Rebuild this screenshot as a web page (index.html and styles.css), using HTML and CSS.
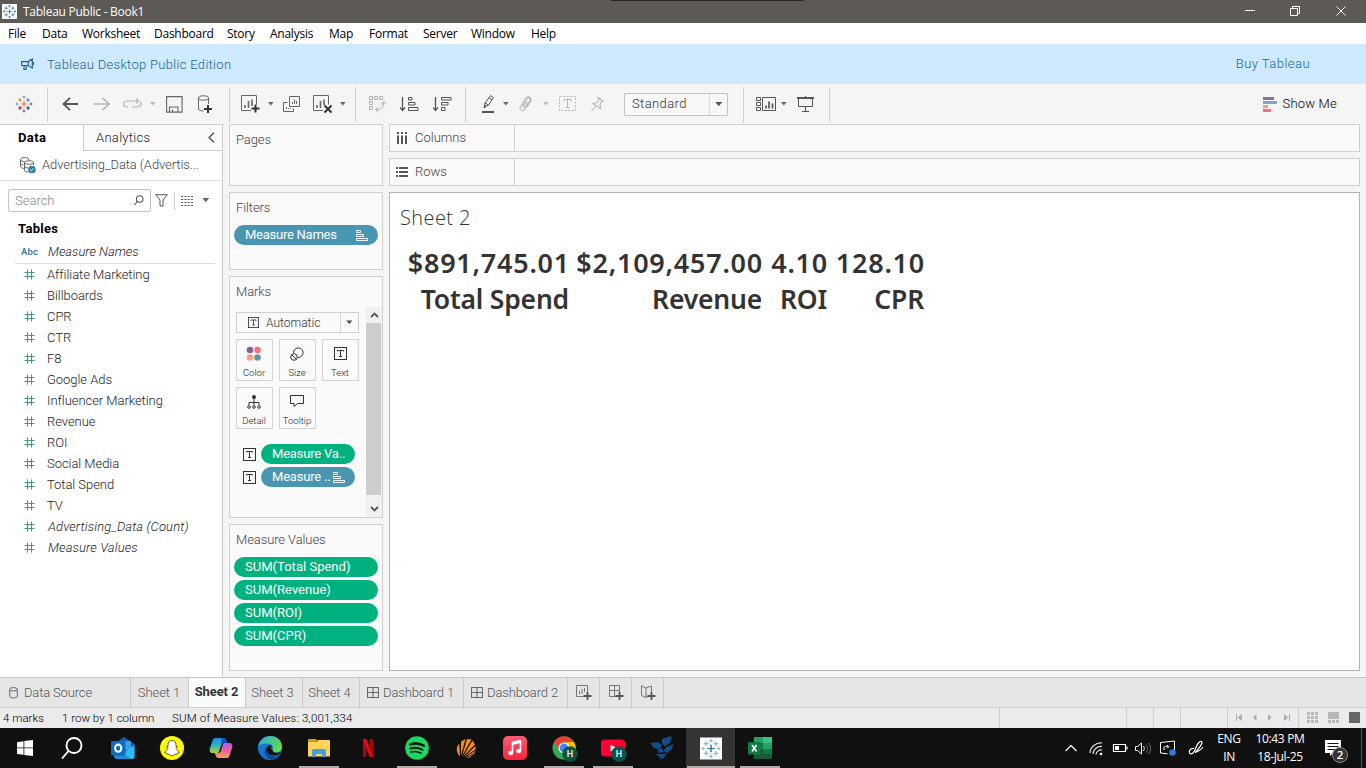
FILE: index.html
```html
<!DOCTYPE html>
<html lang="en">
<head>
<meta charset="utf-8">
<title>Tableau Public - Book1</title>
<link rel="stylesheet" href="styles.css">
</head>
<body>
<svg class="defs" width="0" height="0">
  <symbol id="caret" viewBox="0 0 6 4"><path d="M0 0h5.6L2.8 3.4z" fill="currentColor"/></symbol>
  <symbol id="hash" viewBox="0 0 11 11"><path d="M3.5 0.5v10M7.5 0.5v10M0.5 3.5h10M0.5 7.5h10" stroke="#3f9c7a" fill="none"/></symbol>
  <symbol id="tbox" viewBox="0 0 13 13"><rect x=".5" y=".5" width="12" height="12" fill="none" stroke="#333"/><path d="M3.5 4.5v-1h6v1M6.5 3.5v6M5 9.5h3" fill="none" stroke="#333"/></symbol>
  <symbol id="sortpill" viewBox="0 0 13 11"><path d="M.5.5h4v2h-4zM.5 4.5h7v2h-7zM.5 8.500h11v2H.5z" fill="none" stroke="#fff" stroke-width=".9"/></symbol>
  <symbol id="dash" viewBox="0 0 12 12"><path d="M.5.5h11v10H.5zM6 .5v10M.5 5.500h11" fill="none" stroke="#666" stroke-width="1.1"/></symbol>
  <symbol id="bluelogo" viewBox="0 0 18 18">
    <path d="M9 6v6M6 9h6M5 3v4M3 5h4M13 3v4M11 5h4M5 11v4M3 13h4M13 11v4M11 13h4M9 1v3M7.500 2.500h3M9 14v3M7.500 15.500h3M2.500 7.500v3M1 9h3M15.500 7.500v3M14 9h3" fill="none" stroke="#3a80b0" stroke-width="1"/>
  </symbol>
</svg>

<header class="titlebar">
  <svg class="app-logo" viewBox="0 0 18 18"><rect width="18" height="18" fill="#fff"/><use href="#bluelogo" width="18" height="18"/></svg>
  <span class="win-title">Tableau Public - Book1</span>
  <span class="notch"></span>
  <svg class="winbtns" width="104" height="20" viewBox="0 0 104 20" fill="none" stroke="#fff"><path d="M0 8.500h10M45.500 6.500h7v7h-7zM47.500 6.500v-2h7v7h-2M91.500 4.500l9 9M100.500 4.500l-9 9"/></svg>
</header>

<nav class="menu"><span class="m1">File</span><span class="m2">Data</span><span class="m3">Worksheet</span><span class="m4">Dashboard</span><span class="m5">Story</span><span class="m6">Analysis</span><span class="m7">Map</span><span class="m8">Format</span><span class="m9">Server</span><span class="m10">Window</span><span>Help</span></nav>

<section class="banner">
  <svg width="14" height="13" viewBox="0 0 14 13" fill="none" stroke="#1c6590" stroke-width="1.200"><path d="M.7 3.600h6.500L11.300 1v9L7.200 7.500H.7zM3 7.500v4h2.200v-4M7.300 3.600v4M12.600 4v3"/></svg>
  <span class="banner-text">Tableau Desktop Public Edition</span>
  <span class="buy">Buy Tableau</span>
</section>

<div class="toolbar">
  <div class="tg tg1">
    <svg width="18" height="18" viewBox="0 0 18 18" fill="none" stroke-width="1.100"><path d="M9 6v6M6 9h6" stroke="#e8762c"/><path d="M5 3v4M3 5h4" stroke="#eb912c"/><path d="M13 3v4M11 5h4" stroke="#59879b"/><path d="M5 11v4M3 13h4" stroke="#c72037"/><path d="M13 11v4M11 13h4" stroke="#1f447e"/><path d="M9 .5v3M7.500 2h3" stroke="#7199a6"/><path d="M9 14.500v3M7.500 16h3M16 7.500v3M14.500 9h3" stroke="#5b6591"/><path d="M2 7.500v3M.5 9h3" stroke="#7199a6"/></svg>
  </div>
  <div class="tg tg2">
    <svg width="17" height="14" viewBox="0 0 17 14" fill="none" stroke="#555" stroke-width="1.800"><path d="M16 7H1.500M8 .8L1.500 7 8 13.200"/></svg>
    <svg width="17" height="14" viewBox="0 0 17 14" fill="none" stroke="#b4b4b4" stroke-width="1.600"><path d="M0 7h15M8.500.8L15 7l-6.500 6.200"/></svg>
    <svg width="19" height="14" viewBox="0 0 19 14" fill="none" stroke="#b4b4b4" stroke-width="1.200"><path d="M5 10H4C-.5 10-.5 4 4 4h11M13 1.500L15.500 4 13 6.500M17 4.500c2 2 .5 5.500-2 5.500H9"/></svg>
    <svg class="caret light" width="6" height="4"><use href="#caret"/></svg>
    <svg width="17" height="17" viewBox="0 0 17 17" fill="none" stroke="#666" stroke-width="1.100"><path d="M.6.6h15.500v15.500H.6zM3.500 16v-5h8.500v5M6.500 16v-2.500"/></svg>
    <svg width="16" height="18" viewBox="0 0 16 18" fill="none" stroke="#666"><ellipse cx="5.500" cy="3" rx="5" ry="2.200"/><path d="M.5 3v11c0 1 2 2 5 2M10.500 3v6"/><path d="M10 10v8M6 14h8" stroke="#333" stroke-width="2"/></svg>
  </div>
  <div class="tg tg3">
    <svg width="20" height="18" viewBox="0 0 20 18" fill="none" stroke="#666"><path d="M10 15.500H.5V.5h15v9"/><path d="M4 13v-3M7.500 13V6M11 11V4.500" stroke-width="1.600"/><path d="M14.500 9.500v8M10.500 13.500h8" stroke="#333" stroke-width="2"/></svg>
    <svg class="caret" width="6" height="4"><use href="#caret"/></svg>
    <svg width="18" height="17" viewBox="0 0 18 17" fill="none" stroke="#666"><path d="M6.500 .5h10v10h-10zM4.500 6.500h-4v9h10v-3M9.500 8V6M11.500 8V3.500M13.500 8V5M3.500 13v-2M5.500 13v-1M7.500 13v-1"/></svg>
    <svg width="20" height="19" viewBox="0 0 20 19" fill="none" stroke="#666"><path d="M10 15.500H.5V.5h15v9"/><path d="M4 13v-3M7.500 13V6M11 10V4.500" stroke-width="1.600"/><path d="M11.500 10.500l7 7M18.500 10.500l-7 7" stroke="#333" stroke-width="2"/></svg>
    <svg class="caret" width="6" height="4"><use href="#caret"/></svg>
  </div>
  <div class="tg tg4">
    <svg width="18" height="18" viewBox="0 0 18 18" fill="none" stroke="#b0b0b0"><path d="M.5 1.500h3v3h-3zM5.500 1.500h3v3h-3zM10.500 1.500h3v3h-3zM.5 6.500h3v3h-3zM.5 11.500h3v3h-3zM7 14.500c5 1 8-2 7.500-7M9.500 12L6.500 14.500l3 3M12 9.500l2.500-3 3 3"/></svg>
    <svg width="19" height="16" viewBox="0 0 19 16" fill="none" stroke="#555"><path d="M2.500 1v13M0 11.500L2.500 14.500 5 11.500" stroke-width="1.300"/><path d="M8.500 1.500h3.500v2.500H8.500zM8.500 6.500h6.500v2.500H8.500zM8.500 11.500h9.500v3H8.500z"/></svg>
    <svg width="19" height="16" viewBox="0 0 19 16" fill="none" stroke="#555"><path d="M2.500 1v13M0 11.500L2.500 14.500 5 11.500" stroke-width="1.300"/><path d="M8.500 1.500h9.500v2.500H8.500zM8.500 6.500h6.500v2.500H8.500zM8.500 11.500h3.500v3H8.500z"/></svg>
  </div>
  <div class="tg tg5">
    <svg width="13" height="18" viewBox="0 0 13 18" fill="none" stroke="#555"><path d="M2 13l1-5L8.500.6l3 2L6.500 10zM3 8l3.500 2M7 3l3 2M4 10l-2 3"/><path d="M0 17h12" stroke-width="2"/></svg>
    <svg class="caret" width="6" height="4"><use href="#caret"/></svg>
    <svg width="13" height="16" viewBox="0 0 13 16" fill="none" stroke="#b8b8b8" stroke-width="1.100"><path d="M3.500 10L8 3c1.500-2 4-.5 3 1.500L6 13c-2 3.500-6.500 1-4.500-2.500L6.500 2.500C8.500-.5 13 1 12 4.500L8 11M7.500 5L4.500 10c-.5 1.500 1 2 2 1L9 6"/></svg>
    <svg class="caret light" width="6" height="4"><use href="#caret"/></svg>
    <svg width="17" height="16" viewBox="0 0 17 16" fill="none" stroke="#b8b8b8"><rect x=".5" y=".5" width="16" height="14" stroke-dasharray="2 1.500"/><path d="M5 5.500v-2h7v2M8.500 3.500v8M6.500 11.500h4"/></svg>
    <svg width="14" height="16" viewBox="0 0 14 16" fill="none" stroke="#b8b8b8" stroke-width="1.100"><path d="M6.500 1l5.500 4-1.500.7-1.500 3 .5 3.800L2 7.500l4-1 2-3zM5 10l-4.500 5"/></svg>
    <div class="select"><span>Standard</span><i><svg width="8" height="5" viewBox="0 0 6 4"><use href="#caret" width="6" height="4"/></svg></i></div>
  </div>
  <div class="tg tg6">
    <svg width="21" height="16" viewBox="0 0 21 16" fill="none" stroke="#555"><path d="M.5 1.500h4v3h-4zM.5 6.500h4v3h-4zM.5 11.500h4v3h-4zM6.500 1.500h13v13h-13z"/><path d="M10 12.500v-3M13 12.500v-7M16.500 12.500v-5" stroke-width="1.700"/></svg>
    <svg class="caret" width="6" height="4"><use href="#caret"/></svg>
    <svg width="18" height="17" viewBox="0 0 18 17" fill="none" stroke="#555"><path d="M0 2h17" stroke-width="2"/><path d="M1.500 2v8.500h14V2M8.500 0v2M8.500 10.500v5M5 15.500h7"/></svg>
  </div>
  <div class="showme">
    <svg width="14" height="15" viewBox="0 0 14 15"><path d="M0 0h11v3H0z" fill="#8c7299"/><path d="M0 4h14v3H0z" fill="#7fa4ce"/><path d="M0 8h5v3H0z" fill="#f4a278"/><path d="M0 12h8v3H0z" fill="#fa6e7e"/></svg>
    <span>Show Me</span>
  </div>
</div>

<main class="work">
  <aside class="datapane">
    <div class="ptabs"><b>Data</b><div class="ptab2"><span>Analytics</span><svg width="7" height="11" viewBox="0 0 7 11" fill="none" stroke="#444" stroke-width="1.200"><path d="M6 .8L1 5.500l5 4.700"/></svg></div></div>
    <div class="source">
      <svg width="17" height="17" viewBox="0 0 17 17" fill="none" stroke="#666"><path d="M4 11.500C1.500 11 .5 10.500.5 9V2.500C.5 0 8.500 0 8.500 2v1M.5 2.500c0 1.500 2 2 4 2M.5 6c0 1 1 1.500 3 2"/><ellipse cx="9" cy="5.500" rx="4.500" ry="1.800"/><path d="M4.500 5.500V13c0 1.500 2 2 4 2M13.500 5.500V8M4.500 9c0 1.500 2 2 4 2"/><circle cx="12" cy="12.500" r="3.800" fill="#2f7fa6" stroke="none"/><path d="M10.200 12.500l1.300 1.300 2.300-2.600" stroke="#fff"/></svg>
      <span>Advertising_Data (Advertis...</span>
    </div>
    <div class="searchrow">
      <div class="search"><span>Search</span><svg width="10" height="11" viewBox="0 0 10 11" fill="none" stroke="#555" stroke-width="1.100"><circle cx="5.700" cy="4" r="3.300"/><path d="M3.300 6.500L.5 9.800"/></svg></div>
      <svg class="funnel" width="13" height="13" viewBox="0 0 13 13" fill="none" stroke="#555"><path d="M.7.7h11.600L8 6v6H5V6z"/></svg>
      <i class="vline"></i>
      <svg width="13" height="10" viewBox="0 0 13 10" stroke="#666"><path d="M0 .5h12M0 3.500h12M0 6.500h12M0 9.500h12" stroke-dasharray="2.300 1"/></svg>
      <svg class="caret vcaret" width="8" height="5" viewBox="0 0 6 4"><use href="#caret" width="6" height="4"/></svg>
    </div>
    <h3>Tables</h3>
    <ul class="fields">
      <li class="names"><small>Abc</small><em>Measure Names</em></li>
      <li><svg width="11" height="11"><use href="#hash"/></svg><span>Affiliate Marketing</span></li>
      <li><svg width="11" height="11"><use href="#hash"/></svg><span>Billboards</span></li>
      <li><svg width="11" height="11"><use href="#hash"/></svg><span>CPR</span></li>
      <li><svg width="11" height="11"><use href="#hash"/></svg><span>CTR</span></li>
      <li><svg width="11" height="11"><use href="#hash"/></svg><span>F8</span></li>
      <li><svg width="11" height="11"><use href="#hash"/></svg><span>Google Ads</span></li>
      <li><svg width="11" height="11"><use href="#hash"/></svg><span>Influencer Marketing</span></li>
      <li><svg width="11" height="11"><use href="#hash"/></svg><span>Revenue</span></li>
      <li><svg width="11" height="11"><use href="#hash"/></svg><span>ROI</span></li>
      <li><svg width="11" height="11"><use href="#hash"/></svg><span>Social Media</span></li>
      <li><svg width="11" height="11"><use href="#hash"/></svg><span>Total Spend</span></li>
      <li><svg width="11" height="11"><use href="#hash"/></svg><span>TV</span></li>
      <li><svg width="11" height="11"><use href="#hash"/></svg><em>Advertising_Data (Count)</em></li>
      <li><svg width="11" height="11"><use href="#hash"/></svg><em>Measure Values</em></li>
    </ul>
  </aside>

  <section class="cards">
    <div class="card pages"><h4>Pages</h4></div>
    <div class="card filters"><h4>Filters</h4><div class="pill blue"><span>Measure Names</span><svg width="13" height="11"><use href="#sortpill"/></svg></div></div>
    <div class="card marks">
      <h4>Marks</h4>
      <div class="marks-body">
        <div class="marks-main">
          <div class="marktype"><svg width="11" height="11" viewBox="0 0 13 13"><use href="#tbox" width="13" height="13"/></svg><span>Automatic</span><i><svg width="7" height="5" viewBox="0 0 6 4"><use href="#caret" width="6" height="4"/></svg></i></div>
          <div class="btns">
            <div class="mbtn"><svg width="16" height="16" viewBox="0 0 16 16"><circle cx="4" cy="4" r="3.300" fill="#7f6892"/><circle cx="11.500" cy="4" r="3.300" fill="#fa6e7e"/><circle cx="4" cy="11.500" r="3.300" fill="#f4a278"/><circle cx="11.500" cy="11.500" r="3.300" fill="#6497a5"/></svg><span>Color</span></div>
            <div class="mbtn"><svg width="16" height="16" viewBox="0 0 16 16" fill="none" stroke="#333"><path d="M4.500 7A4.800 4.800 0 1 1 9 11.500"/><circle cx="5" cy="11" r="3.300"/><path d="M2.700 8.700l4.600 4.600"/></svg><span>Size</span></div>
            <div class="mbtn"><svg width="13" height="16" viewBox="0 -1 13 16"><use href="#tbox" width="13" height="13"/></svg><span>Text</span></div>
            <div class="mbtn"><svg width="14" height="16" viewBox="0 0 14 16" fill="none" stroke="#333"><circle cx="7" cy="3" r="2" fill="#333" stroke="none"/><path d="M7 4v7M2 11V8.500h10V11"/><circle cx="2" cy="13" r="1.300"/><circle cx="7" cy="13" r="1.300"/><circle cx="12" cy="13" r="1.300"/></svg><span>Detail</span></div>
            <div class="mbtn"><svg width="15" height="16" viewBox="0 0 15 16" fill="none" stroke="#333"><path d="M.5 1.500h13v8H7.500L4 12.500v-3H.5z"/></svg><span>Tooltip</span></div>
          </div>
          <div class="markpills">
            <svg width="13" height="13"><use href="#tbox"/></svg><div class="pill green"><span>Measure Va..</span></div>
            <svg width="13" height="13"><use href="#tbox"/></svg><div class="pill blue"><span>Measure ..</span><svg width="13" height="11"><use href="#sortpill"/></svg></div>
          </div>
        </div>
        <div class="scroll"><svg width="9" height="6" viewBox="0 0 9 6" fill="none" stroke="#555" stroke-width="1.800"><path d="M1 5l3.500-3.500L8 5"/></svg><i></i><svg width="9" height="6" viewBox="0 0 9 6" fill="none" stroke="#555" stroke-width="1.800"><path d="M1 1l3.500 3.500L8 1"/></svg></div>
      </div>
    </div>
    <div class="card values"><h4>Measure Values</h4>
      <div class="pill green"><span>SUM(Total Spend)</span></div><div class="pill green"><span>SUM(Revenue)</span></div><div class="pill green"><span>SUM(ROI)</span></div><div class="pill green"><span>SUM(CPR)</span></div>
    </div>
  </section>

  <section class="view">
    <div class="shelf"><div class="shelf-label"><svg width="12" height="13" viewBox="0 0 12 13" stroke="#555" stroke-width="2"><path d="M2 0v2M6 0v2M10 0v2M2 3.500v8.500M6 3.500v8.500M10 3.500v8.500"/></svg><span>Columns</span></div></div>
    <div class="shelf"><div class="shelf-label"><svg width="12" height="13" viewBox="0 0 12 13" stroke="#555" stroke-width="2"><path d="M0 2h2M0 6h2M0 10h2M3 2h9M3 6h9M3 10h9"/></svg><span>Rows</span></div></div>
    <div class="sheet">
      <h2>Sheet 2</h2>
      <div class="bans">
        <div class="num">$891,745.01</div><div class="num">$2,109,457.00</div><div class="num">4.10</div><div class="num">128.10</div>
        <div class="lbl">Total Spend</div><div class="lbl">Revenue</div><div class="lbl">ROI</div><div class="lbl">CPR</div>
      </div>
    </div>
  </section>
</main>

<div class="sheettabs">
  <div class="st s0"><svg width="9" height="12" viewBox="0 0 9 12" fill="none" stroke="#666"><ellipse cx="4.500" cy="2.300" rx="3.800" ry="1.700"/><path d="M.7 2.300v7c0 2.200 7.600 2.200 7.600 0v-7"/></svg><span>Data Source</span></div>
  <div class="st s1">Sheet 1</div><div class="st s2">Sheet 2</div><div class="st s3">Sheet 3</div><div class="st s4">Sheet 4</div>
  <div class="st s5"><svg width="12" height="12"><use href="#dash"/></svg><span>Dashboard 1</span></div>
  <div class="st s6"><svg width="12" height="12"><use href="#dash"/></svg><span>Dashboard 2</span></div>
  <div class="st s7"><svg width="16" height="15" viewBox="0 0 16 15" fill="none" stroke="#777"><path d="M8 11.500H.5V.5h11V8M3.500 9V6M6 9V4M8.500 7V3"/><path d="M11.500 7v8M7.500 11h8" stroke="#555" stroke-width="1.800"/></svg></div>
  <div class="st s7"><svg width="16" height="15" viewBox="0 0 16 15" fill="none" stroke="#777"><path d="M8 11.500H1.500V.5h10V8M6.500.5v11M1.500 5.500h10"/><path d="M11.500 7v8M7.500 11h8" stroke="#555" stroke-width="1.800"/></svg></div>
  <div class="st s7"><svg width="16" height="15" viewBox="0 0 16 15" fill="none" stroke="#777"><path d="M6 3L1.500.8V10.500l4.500 2L8 11.500M6 3l5.500-2V8M6 3v9.500"/><path d="M11.500 7v8M7.500 11h8" stroke="#555" stroke-width="1.800"/></svg></div>
</div>

<div class="status">
  <span class="t1">4 marks</span><span class="t2">1 row by 1 column</span><span class="t3">SUM of Measure Values: 3,001,334</span>
  <div class="cells"><i class="c1"></i><i class="c2"></i><i class="c2"></i><i class="c3"></i>
    <div class="pager"><svg width="55" height="7" viewBox="0 0 55 7" fill="#aaa"><path d="M0 0h1v7H0zM6 0v7L1.500 3.500zM20.500 0v7L17 3.500zM32 0v7l3.500-3.500zM48 0v7l4-3.500zM53 0h1v7h-1z"/></svg></div>
    <div class="modes"><svg width="54" height="11" viewBox="0 0 54 11" fill="#b8b8b8"><path d="M0 0h3v3H0zM4 0h3v3H4zM8 0h3v3H8zM0 4h3v3H0zM4 4h3v3H4zM8 4h3v3H8zM0 8h3v3H0zM4 8h3v3H4zM8 8h3v3H8zM21 0h11v7H21zM21 8h3v3h-3zM25 8h3v3h-3zM29 8h3v3h-3z"/><path d="M42 0h11v11H42z" fill="#666"/></svg></div>
  </div>
</div>

<footer class="taskbar">
  <div class="tk"><svg width="16" height="16" viewBox="0 0 16 16" fill="#fff"><path d="M0 2.200L6.500 1.200v6.300H0zM7.300 1.100L16 0v7.500H7.300zM0 8.300h6.500v6.500L0 13.900zM7.300 8.300H16V16l-8.700-1.100z"/></svg></div>
  <div class="tk"><svg class="find" width="22" height="22" viewBox="0 0 22 22" fill="none" stroke="#fff" stroke-width="1.900"><circle cx="13" cy="8.500" r="7.500"/><path d="M7.500 14L1 21.500"/></svg></div>
  <div class="tk"><svg width="24" height="24" viewBox="0 0 24 24"><path d="M3 8L13 1l10.500 7v12.500a2.500 2.500 0 0 1-2.500 2.500H6.500A3.500 3.500 0 0 1 3 19.500z" fill="#0f5fae"/><path d="M7 5h13v9H7z" fill="#39a0e8"/><path d="M23.500 9v11.500A2.500 2.500 0 0 1 21 23H4.500z" fill="#2bbef5"/><path d="M3.500 13L21 23H6.500C4 23 3 21 3 19z" fill="#1b8ddb"/><rect y="5" width="14.500" height="14.500" rx="1.500" fill="#0f6cbd"/><ellipse cx="7.200" cy="12.200" rx="3.100" ry="3.600" fill="none" stroke="#fff" stroke-width="2"/></svg></div>
  <div class="tk"><svg width="24" height="24" viewBox="0 0 24 24"><circle cx="12" cy="12" r="12" fill="#fffb00"/><path d="M12 4.500c2.800 0 4 2 4 4v2l1.500.3-1.300 1.500c.5 2 1.700 3 3.300 3.700-.5 1-1.500 1-2.200 1.200l-.5 1.200c-1-.3-2-.2-3 .7-1 .8-2.600.8-3.600 0-1-.9-2-1-3-.7l-.5-1.200C6 17 5 17 4.500 16c1.600-.7 2.800-1.700 3.300-3.700l-1.300-1.500 1.500-.3v-2c0-2 1.200-4 4-4z" fill="#fff" stroke="#333" stroke-width=".8"/></svg></div>
  <div class="tk"><svg width="24" height="22" viewBox="0 0 24 22"><defs><linearGradient id="cp1" x1="0" y1="0" x2="0" y2="1"><stop offset="0" stop-color="#1b8bea"/><stop offset=".5" stop-color="#2bb6c4"/><stop offset="1" stop-color="#b9cf28"/></linearGradient><linearGradient id="cp2" x1="0" y1="0" x2="0" y2="1"><stop offset="0" stop-color="#b35cf0"/><stop offset=".5" stop-color="#f0609a"/><stop offset="1" stop-color="#ffa554"/></linearGradient></defs><path d="M6 1h8c2 0 3 1 3.500 3l.8 2H15c-2 0-2.500 1-3 2.500l-2 6C9.500 16 9 16 7.500 16H4c-3 0-4-2-3-5L3.500 3.500C4 2 4.500 1 6 1z" fill="url(#cp1)"/><path d="M12.500 1H14c2 0 3 1 3.500 3l.8 2H15c-1.500 0-2.200.8-2.800 2z" fill="#1551c4"/><path d="M18 21h-8c-2 0-3-1-3.500-3l-.7-2H9c2 0 2.500-1 3-2.500l2-6C14.500 6 15 6 16.500 6H20c3 0 4 2 3 5l-2.500 7.500C20 20 19.500 21 18 21z" fill="url(#cp2)"/></svg></div>
  <div class="tk"><svg width="24" height="24" viewBox="0 0 24 24"><defs><linearGradient id="eg" x1="0" y1="0" x2="1" y2=".5"><stop offset="0" stop-color="#28a9e5"/><stop offset="1" stop-color="#60d94d"/></linearGradient></defs><circle cx="12" cy="12" r="12" fill="#1676cc"/><path d="M.3 10C1.500 4 6.500 0 12.300 0 19.500 0 24 5 24 10.500c0 4-3 6-6 6-3.500 0-4.200-1.500-3.500-2.500 1.700-3-.5-6.500-5.500-6.500C5 7.500 1.500 8.500.3 10z" fill="url(#eg)"/><path d="M9 10c-5 5-1 13.500 5 13.800 3.500 0 6-2 7.500-4.300-6 3-14.500-1.500-12.500-9.500z" fill="#0d4a97"/><path d="M14.500 14c-2-.5-2-3-.5-4-3-1.500-6 .5-5.500 4 .6 4 6.500 7 12.500 4.500l2-2.500c-3 1.500-8 1-8.500-2z" fill="#111"/></svg></div>
  <div class="tk run"><svg width="22" height="19" viewBox="0 0 22 19"><path d="M0 1a1 1 0 0 1 1-1h7l2 2h-1L8 4H0z" fill="#dc9415"/><path d="M0 3h9l1-2h11a1 1 0 0 1 1 1v15.500H0z" fill="#ffd35c"/><path d="M4 18v-6a2 2 0 0 1 2-2h10a2 2 0 0 1 2 2v6h-4v-3H8v3z" fill="#45a0dc"/></svg></div>
  <div class="tk"><svg width="10" height="18" viewBox="0 0 10 18"><path d="M0 0h3.300v17.500L0 18zM6.700 0H10v18l-3.300-.5z" fill="#a90710"/><path d="M0 0h3.500L10 18l-3.500-.5z" fill="#e50914"/></svg></div>
  <div class="tk run"><svg width="24" height="24" viewBox="0 0 24 24" fill="none" stroke="#111" stroke-linecap="round"><circle cx="12" cy="12" r="11.800" fill="#1ed760" stroke="none"/><path d="M5 8.500c4.500-1.500 10-1 14 1.300" stroke-width="2.300"/><path d="M5.500 12.500c4-1.200 8.500-.7 12 1.300" stroke-width="1.900"/><path d="M6 16c3.500-1 7-.6 10 1.200" stroke-width="1.500"/></svg></div>
  <div class="tk"><svg width="20" height="20" viewBox="0 0 20 20" fill="#f58a1c"><path d="M4 18.500C1 15 0 12 1.500 8l1.800-2.500zM5 17.500L5 3.500 9.500 1zM6 18L11 1l4.500.5zM7 18.500L16.500 2.500l2.500 4zM8 19l11.500-11v3.500zM9 19.500l10.500-6.800-1.500 3zM10 19.800l7-2.800-3.500 2.500z"/></svg></div>
  <div class="tk"><svg width="24" height="24" viewBox="0 0 24 24"><defs><linearGradient id="am" x1="0" y1="0" x2="0" y2="1"><stop offset="0" stop-color="#fb5b74"/><stop offset="1" stop-color="#fa233b"/></linearGradient></defs><rect width="24" height="24" rx="5" fill="url(#am)"/><path d="M9.500 16.500V6.500l8-1.800v10" fill="none" stroke="#fff" stroke-width="1.600"/><path d="M9 6l9-2v3L9 9z" fill="#fff"/><ellipse cx="7.700" cy="17" rx="2.500" ry="2.200" fill="#fff"/><ellipse cx="15.700" cy="15" rx="2.500" ry="2.200" fill="#fff"/></svg></div>
  <div class="tk run"><svg class="badged" width="26" height="26" viewBox="0 0 26 26"><circle cx="12" cy="12" r="11.500" fill="#34a853"/><path d="M2 6a11.500 11.500 0 0 1 20 0H12L7.500 14z" fill="#ea4335"/><path d="M22 6a11.500 11.500 0 0 1-10 17.500L17 14l-3-8z" fill="#fbbc04"/><circle cx="12" cy="12" r="5.500" fill="#fff"/><circle cx="12" cy="12" r="4.400" fill="#4285f4"/><circle cx="18" cy="18" r="7.800" fill="#0b5345"/><text x="18" y="21.200" text-anchor="middle" class="badge-h">H</text></svg></div>
  <div class="tk run"><svg class="badged" width="26" height="26" viewBox="0 0 26 26"><rect y="3.500" width="24" height="17" rx="3.500" fill="#ff0033"/><path d="M9.500 8.500l6 3.500-6 3.500z" fill="#fff"/><circle cx="18" cy="18" r="7.800" fill="#0b5345"/><text x="18" y="21.200" text-anchor="middle" class="badge-h">H</text></svg></div>
  <div class="tk"><svg width="24" height="24" viewBox="0 0 24 24" fill="#164c87"><path d="M12 3l7-2.500h3L20 7l-5.500 3.500L12 7zM0 7l8-1 4 3.500-3 3.500-5-1zM15.500 11.500L24 8l-3 6-4 3-3.500-2zM7 14.500l4.500-3L14 16l-5 1zM6 18l5 .2 6-.7-5 6z"/></svg></div>
  <div class="tk active run"><svg width="22" height="23" viewBox="0 0 18 18"><rect width="18" height="18" fill="#fff"/><g opacity=".55"><use href="#bluelogo" width="18" height="18"/></g><path d="M9 6v6M6 9h6" stroke="#2676ad"/></svg></div>
  <div class="tk run"><svg width="24" height="22" viewBox="0 0 24 22"><path d="M6 0h9v6H6z" fill="#21a366"/><path d="M15 0h9v6h-9z" fill="#33c481"/><path d="M6 6h9v6H6z" fill="#107c41"/><path d="M15 6h9v6h-9z" fill="#21a366"/><path d="M6 12h9v5H6z" fill="#185c37"/><path d="M15 12h9v5h-9z" fill="#107c41"/><path d="M6 17h18v5H6z" fill="#185c37"/><rect y="5" width="12.500" height="12.500" rx="1" fill="#107c41"/><path d="M4 8l4.500 6.500M8.500 8L4 14.500" stroke="#fff" stroke-width="1.700"/></svg></div>
  <div class="tray">
    <svg width="140" height="20" viewBox="0 0 140 20" fill="none" stroke="#fff"><path d="M.5 13L6 7.500l5.500 5.500" stroke-width="1.200"/><g stroke="#ddd" stroke-width="1.200"><path d="M25 15C25 9 31 4.500 37 5M28 16c0-4 4-8 9-7.500M31 16.500c0-2.500 3-5 6-4.500"/><circle cx="36" cy="16" r="1.300" fill="#fff" stroke="none"/></g><path d="M48.500 6.500h12v7h-12zM62 8.500v3" stroke-width="1.200"/><path d="M50 8h4v4h-4z" fill="#fff" stroke="none"/><path d="M72.500 8.500h-2v4h2l4 3.500V5zM78.500 8c1 1.500 1 3.500 0 5"/><path d="M81 6.500c2 2.500 2 6 0 8M83.500 5c2.800 3.500 2.800 8 0 11" stroke="#777"/><path d="M95.500 4.500L109.500 3v9M95.500 4.500v10.500l7 .8M99 12V9.500c0-1 3-1.500 4.500-1L102 7M104 8.500l-2 2"/><circle cx="107.500" cy="14.500" r="3.300" fill="#2b7cd8" stroke="none"/><path d="M129 10.500c-5-1-6 5-3 5.500 4 0 4-7 7.500-11 2.500-3 4.500-1.500 3 1-1.500 3.500-4 6-6.500 8.500 3-1 6-2.500 8-5.500" stroke-width="1.200"/></svg>
    <div class="lang"><span>ENG</span><span>IN</span></div>
    <div class="clock"><span>10:43 PM</span><span>18-Jul-25</span></div>
    <svg class="notif" width="26" height="26" viewBox="0 0 26 26"><path d="M1 1h16v13H9l-3 3v-3H1z" fill="#fff"/><path d="M3.500 4.500h11M3.500 7.500h11M3.500 10.500h8" stroke="#111"/><circle cx="16" cy="16" r="7.500" fill="#333" stroke="#888"/><text x="16" y="20.200" text-anchor="middle" class="badge-2">2</text></svg>
    <i class="desk"></i>
  </div>
</footer>
</body>
</html>
```
FILE: styles.css
```css
* { box-sizing: border-box; }
body { margin: 0; width: 1366px; height: 768px; overflow: hidden; background: #f5f5f5; color: #333; font: 300 13px/16px Roboto, "Liberation Sans", sans-serif; display: flex; flex-direction: column; }
svg { display: block; flex: none; }
i { display: block; flex: none; }
span { white-space: nowrap; }
h2, h3, h4, ul { margin: 0; padding: 0; font-weight: inherit; font-size: inherit; }
.defs { position: absolute; }

.titlebar { height: 23px; background: #5d5955; display: flex; align-items: center; padding-left: 2px; color: #fff; flex: none; position: relative; }
.app-logo { width: 15px; height: 15px; }
.win-title { font: 400 12px "Open Sans", sans-serif; letter-spacing: -.25px; margin-left: 6px; }
.notch { position: absolute; left: 611px; top: 0; width: 193px; height: 1px; background: #2b2926; }
.winbtns { margin-left: auto; margin-right: 17px; }

.menu { height: 21px; background: #fff; color: #000; display: flex; align-items: center; padding-left: 8px; font: 400 12px "Open Sans", sans-serif; letter-spacing: -.25px; flex: none; }
.m1 { width: 34px; } .m2 { width: 40px; } .m3 { width: 72px; } .m4 { width: 73px; } .m5 { width: 43px; } .m6 { width: 59px; } .m7 { width: 40px; } .m8 { width: 54px; } .m9 { width: 48px; } .m10 { width: 60px; }

.banner { height: 40px; background: #cfe9ff; color: #1c6590; display: flex; align-items: center; padding: 0 56px 0 21px; flex: none; }
.banner-text { margin-left: 12px; letter-spacing: .31px; padding-top: 2px; }
.buy { margin-left: auto; letter-spacing: .45px; }

.toolbar { height: 40px; display: flex; align-items: center; flex: none; }
.tg { height: 35px; border-right: 1px solid #cfcfcf; display: grid; align-items: center; flex: none; }
.tg1 { width: 48px; padding-left: 15px; }
.tg2 { width: 182px; padding-left: 14px; grid-template-columns: 32px 29px 27px 16px 32px 31px; }
.tg3 { width: 126px; padding-left: 11px; grid-template-columns: 27px 15px 30px 27px 10px; }
.tg4 { width: 110px; padding-left: 13px; grid-template-columns: 31px 33px 20px; }
.tg5 { width: 278px; padding-left: 16px; grid-template-columns: 21px 16px 24px 16px 32px 33px 104px; }
.tg6 { width: 86px; padding-left: 12px; grid-template-columns: 25px 16px 18px; }
.caret { color: #666; }
.light { color: #bbb; }
.select { width: 104px; height: 23px; border: 1px solid #c4c4c4; border-radius: 1px; background: #f8f8f8; display: flex; align-items: center; padding-left: 7px; letter-spacing: .4px; color: #333; }
.select i, .marktype i { margin-left: auto; width: 18px; height: 100%; border-left: 1px solid #d8d8d8; display: flex; align-items: center; justify-content: center; color: #555; }
.showme { margin-left: auto; margin-right: 29px; display: flex; align-items: center; gap: 6px; color: #000; letter-spacing: .2px; }

.work { height: 553px; display: flex; flex: none; }
.datapane { width: 223px; border-top: 1px solid #ccc; border-right: 1px solid #ccc; background: #fff; flex: none; }
.ptabs { height: 26px; display: flex; line-height: 26px; }
.ptabs b { width: 83px; padding-left: 18px; font-weight: 700; color: #000; letter-spacing: .4px; }
.ptab2 { flex: 1; border-left: 1px solid #ccc; border-bottom: 1px solid #ccc; background: #fafafa; display: flex; align-items: center; justify-content: space-between; padding: 0 7px 0 12px; color: #222; letter-spacing: .3px; }
.source { height: 30px; border-bottom: 1px solid #ddd; display: flex; align-items: center; padding: 0 0 1px 20px; gap: 5px; color: #444; letter-spacing: -.09px; }
.searchrow { display: flex; align-items: center; padding: 8px 0 0 8px; height: 31px; }
.search { width: 143px; height: 23px; border: 1px solid #c4c4c4; border-radius: 2px; display: flex; align-items: center; justify-content: space-between; padding: 0 6px; color: #888; }
.funnel { margin-left: 4px; }
.vline { width: 1px; height: 18px; background: #ccc; margin: 0 6px; }
.vcaret { margin-left: 8px; }
h3 { height: 29px; padding: 9px 0 0 18px; font-weight: 700; color: #000; letter-spacing: .3px; }
.fields { list-style: none; color: #222; letter-spacing: -.05px; }
.fields li { height: 21px; display: flex; align-items: center; padding-left: 24px; gap: 12px; }
.fields em { letter-spacing: .12px; padding-left: 1px; }
.fields .names { height: 23px; margin: 0 7px 0 15px; padding: 0 0 1px 6px; gap: 9px; border-bottom: 1px solid #ddd; }
.fields .names em { letter-spacing: -.03px; }
small { font: 500 9.500px Roboto, sans-serif; color: #2f6f8f; letter-spacing: .2px; width: 17px; }

.cards { width: 154px; margin-left: 6px; display: flex; flex-direction: column; gap: 6px; flex: none; }
.card { border: 1px solid #d0d0d0; background: #fafafa; flex: none; }
h4 { height: 32px; padding: 7px 0 0 6px; color: #444; font-weight: 300; letter-spacing: -.1px; }
.pages { height: 62px; } .filters { height: 78px; } .marks { height: 242px; } .values { height: 147px; }
.pill { height: 20px; border-radius: 10px; margin: 0 4px 3px; padding: 0 9px 0 11px; display: flex; align-items: center; justify-content: space-between; color: #fff; font-weight: 400; letter-spacing: .02px; }
.filters .pill { letter-spacing: -.25px; }
.blue { background: #4996b2; } .green { background: #00b180; }
.marks h4 { height: 30px; }
.marks-body { display: flex; height: 210px; }
.marks-main { width: 136px; padding: 5px 0 0 6px; }
.marktype { width: 123px; height: 21px; border: 1px solid #d0d0d0; display: flex; align-items: center; padding-left: 11px; gap: 7px; color: #333; font-size: 12px; }
.btns { display: grid; grid-template-columns: 37px 37px 37px; gap: 6px; margin-top: 6px; }
.mbtn { height: 42px; border: 1px solid #d4d4d4; display: flex; flex-direction: column; align-items: center; justify-content: space-between; padding: 6px 1px 0 0; font-size: 9.500px; line-height: 14px; color: #222; font-weight: 300; }
.markpills { display: grid; grid-template-columns: 18px 94px; row-gap: 3px; align-items: center; margin-top: 15px; padding-left: 7px; }
.markpills .pill { margin: 0; padding-left: 11px; letter-spacing: -.2px; }
.scroll { width: 16px; background: #f0f0f0; display: flex; flex-direction: column; align-items: center; padding-top: 5px; }
.scroll i { width: 15px; height: 172px; background: #cdcdcd; margin: 5px 1px 11px 0; }

.view { width: 971px; margin-left: 6px; display: flex; flex-direction: column; gap: 6px; }
.shelf { height: 28px; border: 1px solid #d0d0d0; background: #fafafa; }
.shelf-label { width: 125px; height: 26px; border-right: 1px solid #d0d0d0; display: flex; align-items: center; padding-left: 6px; gap: 7px; color: #444; }
.sheet { height: 479px; border: 1px solid #b4b4b4; background: #fff; padding: 11px 0 0 10px; }
h2 { font: 300 20px/28px "Open Sans", "Noto Sans", sans-serif; letter-spacing: .4px; color: #333; }
.bans { display: grid; grid-template-columns: 169px 193px 65px 97px; margin-top: 13px; text-align: right; font: 600 27px/36px "Noto Sans", sans-serif; color: #333; white-space: nowrap; }
.num { letter-spacing: .75px; margin-right: -1px; }
.lbl { letter-spacing: -.2px; font-size: 26.500px; }

.sheettabs { height: 30px; border-top: 1px solid #c8c8c8; background: #e6e6e6; display: flex; flex: none; color: #555; }
.st { border-right: 1px solid #c8c8c8; display: flex; align-items: center; justify-content: center; letter-spacing: -.05px; }
.s0 { width: 131px; justify-content: flex-start; padding-left: 9px; gap: 6px; letter-spacing: -.15px; }
.s1 { width: 58px; padding-right: 1px; } .s2 { width: 57px; background: #fafafa; color: #333; font-weight: 700; letter-spacing: -.1px; padding-right: 1px; padding-bottom: 2px; }
.s3, .s4 { width: 57px; padding-right: 3px; } .s5, .s6 { width: 104px; gap: 4px; padding-right: 2px; letter-spacing: -.15px; } .s7 { width: 32px; }
.status { height: 21px; background: #ebebeb; border-top: 1px solid #d0d0d0; display: flex; align-items: center; flex: none; font-size: 11.500px; color: #000; }
.t1 { width: 62px; padding-left: 3px; } .t2 { width: 110px; } .t3 { letter-spacing: .18px; }
.cells { margin-left: auto; height: 100%; display: flex; }
.cells i, .pager, .modes { border-left: 1px solid #ccc; }
.c1 { width: 127px; } .c2 { width: 27px; } .c3 { width: 47px; }
.pager { width: 71px; padding: 6px 0 0 8px; } .modes { width: 68px; padding: 4px 0 0 8px; }

.taskbar { height: 40px; background: #101010; display: flex; flex: none; }
.tk { width: 49px; height: 40px; display: flex; align-items: center; justify-content: center; flex: none; }
.find { margin-right: 3px; }
.badged { margin: 2px -2px 0 0; }
.run { background: linear-gradient(#b3aca6, #b3aca6) center bottom / 40px 2px no-repeat; }
.active { background-color: #343434; background-size: 48px 2px; }
.badge-h { font: 500 9px Roboto, sans-serif; fill: #fff; }
.badge-2 { font: 600 11.500px "Open Sans", sans-serif; fill: #fff; letter-spacing: 0; }
.tray { margin-left: auto; display: flex; align-items: center; color: #fff; font: 400 12px/18px "Open Sans", sans-serif; letter-spacing: -.35px; }
.lang, .clock { display: flex; flex-direction: column; align-items: center; }
.lang { width: 24px; margin-left: 12px; } .clock { width: 50px; margin-left: 14px; }
.notif { margin: 7px 0 0 19px; }
.desk { width: 1px; height: 40px; background: #555; margin: 0 4px 0 11px; }
```
